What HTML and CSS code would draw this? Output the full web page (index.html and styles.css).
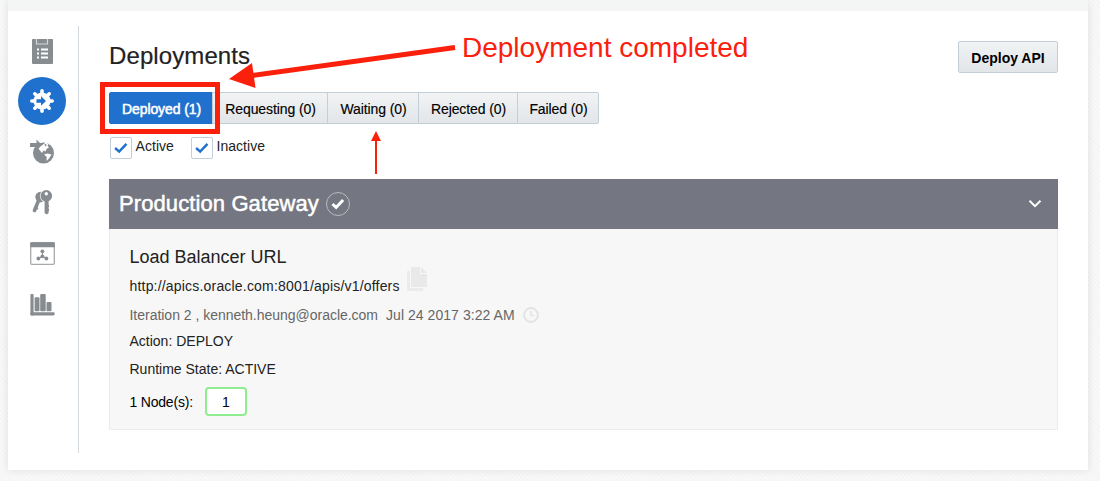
FILE: index.html
```html
<!DOCTYPE html>
<html lang="en">
<head>
<meta charset="utf-8">
<title>Deployments</title>
<link rel="stylesheet" href="styles.css">
</head>
<body>
<div class="page">
  <div class="strip"></div>
  <div class="layout">
    <nav class="nav">
      <a class="nav-item"><svg viewBox="0 0 48 48"><rect x="14" y="13" width="21" height="25" rx="1" fill="#878c90"/><path d="M18.500 13v5h11v-5" fill="none" stroke="#d5d8da" stroke-width="1.200"/><path d="M19 23.500h2M19 27.500h2M19 31.500h2M23 23.500h7M23 27.500h7M23 31.500h7" stroke="#fff" stroke-width="1.800"/></svg></a>
      <a class="nav-item active"><svg viewBox="0 0 48 48"><g stroke="#fff" stroke-width="3.600" stroke-linecap="round"><path d="M24 13.800v20.400M13.800 24h20.400M16.800 16.800l14.400 14.400M16.800 31.200l14.400-14.400"/></g><circle cx="24" cy="24" r="8.600" fill="#fff"/><path d="M18.500 22.200H23v-3l5 4.800-5 4.800v-3h-4.500z" fill="#1f71cd"/></svg></a>
      <a class="nav-item"><svg viewBox="0 0 48 48"><circle cx="25.500" cy="25" r="10.500" fill="#878c90"/><path d="M19.500 19l5-2 3-2.500 3 1.500-1 2 1.500 1.500-2.500 1.500-1 2.500-2-1-1.500 2.500-2.500-3z" fill="#fff"/><path d="M26 26.500l3.500-1 4 1-2.500 4-2.500 2.500.2-4z" fill="#fff"/><path d="M12 15h6.500v-3.500l5.500 5.500-5.500 5.500V19H12z" fill="#878c90"/><path d="M26.500 15.500l2.500 1.500-2 1.500z" fill="#878c90"/></svg></a>
      <a class="nav-item"><svg viewBox="0 0 48 48"><path d="M22 18l-5.500 13.500" stroke="#878c90" stroke-width="3.600" stroke-linecap="round"/><circle cx="22.500" cy="18" r="5.200" fill="#878c90"/><circle cx="28.300" cy="16.800" r="6.500" fill="#fff"/><path d="M26.600 19h4v15l-1.800 1.500-2.200-1.500z" fill="#878c90"/><circle cx="28.300" cy="16.800" r="5.800" fill="#878c90"/><circle cx="28.300" cy="14.700" r="1.700" fill="#fff"/><path d="M18.500 29l1.500.8M30 27h1M30 31h1" stroke="#878c90" stroke-width="2"/></svg></a>
      <a class="nav-item"><svg viewBox="0 0 48 48"><rect x="12.700" y="12.700" width="23.600" height="21.600" rx="1.200" fill="#fff" stroke="#a6aaad" stroke-width="1.300"/><path d="M12.200 17.300v-4q0-1 1-1h22.600q1 0 1 1v4z" fill="#878c90"/><path d="M24.400 21.300v5l-4 2.200M24.400 26.300l4 2.200" fill="none" stroke="#878c90"/><g fill="#878c90"><circle cx="24.400" cy="21.300" r="1.900"/><circle cx="24.400" cy="26.300" r="1.900"/><circle cx="20.400" cy="28.500" r="1.900"/><circle cx="28.400" cy="28.500" r="1.900"/></g></svg></a>
      <a class="nav-item"><svg viewBox="0 0 48 48"><g fill="#878c90"><rect x="12.400" y="13" width="3.200" height="21.400" rx="1"/><rect x="12.400" y="31.200" width="24.300" height="3.200" rx="1.300"/><rect x="16.600" y="16.300" width="4.900" height="14" rx="1"/><rect x="22.200" y="13" width="5.500" height="17.300" rx="1"/><rect x="28.500" y="21" width="5" height="9.300" rx="1"/></g></svg></a>
    </nav>
    <main class="main">
      <header class="head"><h1 class="title"><span>Deployments</span></h1><button class="deploy">Deploy API</button></header>
      <div class="tabs">
        <button class="tab selected">Deployed (1)</button><button class="tab requesting">Requesting (0)</button><button class="tab waiting">Waiting (0)</button><button class="tab rejected">Rejected (0)</button><button class="tab failed">Failed (0)</button>
      </div>
      <div class="filters">
        <label class="filter"><span class="box"><svg viewBox="0 0 22 22"><path d="M4.500 11l4.500 4 8-8.500" fill="none" stroke="#1f71cd" stroke-width="2.700"/></svg></span><span class="filter-text">Active</span></label>
        <label class="filter"><span class="box"><svg viewBox="0 0 22 22"><path d="M4.500 11l4.500 4 8-8.500" fill="none" stroke="#1f71cd" stroke-width="2.700"/></svg></span><span class="filter-text">Inactive</span></label>
      </div>
      <section class="gateway">
        <div class="gateway-head">
          <h2 class="gateway-name">Production Gateway</h2>
          <svg class="status" viewBox="0 0 26 26"><circle cx="13" cy="13" r="11.500" fill="none" stroke="#b9bac1"/><path d="M7.500 13l3.600 3.400 7-7.500" fill="none" stroke="#fff" stroke-width="3"/></svg>
          <svg class="chevron" viewBox="0 0 14 10"><path d="M1.500 1.800L7 7.200l5.500-5.400" fill="none" stroke="#fff" stroke-width="2"/></svg>
        </div>
        <div class="gateway-body">
          <h3 class="lb">Load Balancer URL</h3>
          <div class="row url"><span class="url-text">http://apics.oracle.com:8001/apis/v1/offers</span><svg class="copy" viewBox="0 0 20 24"><path d="M0 4h3v17h13v3H0z" fill="#ebebeb"/><path d="M4 0h9v7h7v13H4z" fill="#e9e9e9"/><path d="M14 0l6 6h-6z" fill="#e9e9e9"/></svg></div>
          <div class="row meta"><span class="iteration">Iteration 2 , kenneth.heung@oracle.com</span><span class="date">Jul 24 2017 3:22 AM</span><svg class="clock" viewBox="0 0 16 16"><circle cx="8" cy="8" r="6.900" fill="none" stroke="#e3e3e3" stroke-width="2"/><path d="M8 4v4.500h3.500" fill="none" stroke="#e3e3e3" stroke-width="1.600"/></svg></div>
          <div class="row"><span class="action">Action: DEPLOY</span></div>
          <div class="row state"><span class="runtime">Runtime State: ACTIVE</span></div>
          <div class="row nodes"><span class="nodes-label">1 Node(s):</span><span class="count">1</span></div>
        </div>
      </section>
    </main>
  </div>
</div>
<svg class="marks" viewBox="0 0 1100 481"><rect x="102.500" y="84.500" width="115" height="47" fill="none" stroke="#fb200b" stroke-width="5"/><path d="M455 47.500L252 75.500" stroke="#fb200b" stroke-width="5"/><path d="M229 79l23-16 3.500 25z" fill="#fb200b"/><path d="M376 174v-36" stroke="#fb200b" stroke-width="2"/><path d="M376 131l5 10h-10z" fill="#fb200b"/></svg>
<div class="callout">Deployment completed</div>
</body>
</html>
```
FILE: styles.css
```css
* { box-sizing: border-box; }
body { margin: 0; height: 481px; overflow: hidden; background: repeating-linear-gradient(45deg, #f9f9f9 0 1.5px, #f5f5f5 1.5px 3px); font: 14px/20px "Liberation Sans", Arial, sans-serif; color: #222; }
.page { width: 1080px; height: 470px; margin-left: 8px; background: #fff; box-shadow: 0 0 8px rgba(0,0,0,.1); }
.strip { height: 11px; background: #f3f6f5; }
.layout { display: flex; padding: 15px 30px 0 0; }
.nav { display: flex; flex-direction: column; gap: 3px; width: 71px; height: 427px; padding-left: 10px; border-right: 1px solid #d2dae0; }
.nav-item { width: 48px; height: 48px; border-radius: 50%; }
.nav-item svg { display: block; width: 48px; height: 48px; }
.active { background: #1f71cd; }
.main { flex: 1; min-width: 0; padding: 15px 0 0 30px; }
.head { display: flex; justify-content: space-between; height: 51px; }
.title { margin: 0; font-size: 24px; line-height: 29px; font-weight: 400; letter-spacing: .1px; -webkit-text-stroke: .2px #222; }
button { font: inherit; color: #000; padding: 0; border: 1px solid #c2cfd7; background: linear-gradient(#f1f3f4, #e2e6e9); }
.deploy { width: 100px; height: 32px; padding-top: 1px; border-radius: 2px; font-size: 14px; font-weight: 700; }
.tabs { display: flex; height: 32px; }
.tab { margin-left: -1px; padding: 1px 0 0 1px; white-space: nowrap; letter-spacing: -.1px; -webkit-text-stroke: .15px #000; }
.selected { width: 104px; margin-left: 0; background: #1f71cd; border-color: #1f71cd; color: #fff; -webkit-text-stroke: .5px #fff; border-radius: 2px 0 0 2px; }
.requesting { width: 116px; }
.waiting { width: 92px; }
.rejected { width: 100px; }
.failed { width: 82px; border-radius: 0 2px 2px 0; }
.filters { display: flex; gap: 17px; height: 55px; padding: 13px 0 0 1px; }
.filter { display: flex; gap: 3.5px; height: 22px; }
.box { width: 22px; height: 22px; border: 1px solid #c2cfd7; border-radius: 2px; }
.box svg { display: block; width: 20px; height: 20px; }
.filter-text { line-height: 18px; letter-spacing: .05px; }
.gateway-head { display: flex; align-items: center; height: 50px; padding: 0 16px 0 10px; background: #747681; color: #fff; }
.gateway-name { margin: 0; font-size: 22px; line-height: 30px; font-weight: 400; letter-spacing: .1px; -webkit-text-stroke: .5px #fff; }
.status { width: 26px; height: 26px; margin: -1px 0 0 6px; }
.chevron { width: 14px; height: 10px; margin-left: auto; }
.gateway-body { height: 201px; padding: 18px 20px 0 19.5px; background: #f7f7f7; border: 1px solid #ececec; border-top: 0; }
.lb { margin: 0; font-size: 18px; line-height: 20px; font-weight: 400; }
.row { display: flex; align-items: center; height: 28px; white-space: nowrap; }
.url { margin-top: 5px; }
.url-text { letter-spacing: .19px; }
.copy { width: 20px; height: 24px; margin: -14px 0 0 7px; }
.meta { color: #666; margin-top: 1px; }
.iteration { letter-spacing: -.02px; }
.date { margin-left: 8px; letter-spacing: .05px; }
.clock { width: 16px; height: 16px; margin-left: 8px; }
.row .action { margin-top: -4px; }
.state { margin-top: -2px; }
.nodes { margin-top: 4px; color: #000; }
.nodes-label { width: 63px; padding-top: 1px; letter-spacing: -.2px; }
.count { width: 42px; height: 29px; margin-left: 12.5px; border: 2px solid #90ec90; border-radius: 4px; background: #fff; text-align: center; line-height: 27px; }
.marks { position: absolute; left: 0; top: 0; width: 1100px; height: 481px; }
.callout { position: absolute; left: 462px; top: 32px; font-size: 28px; line-height: 32px; color: #fb200b; white-space: nowrap; }
```
